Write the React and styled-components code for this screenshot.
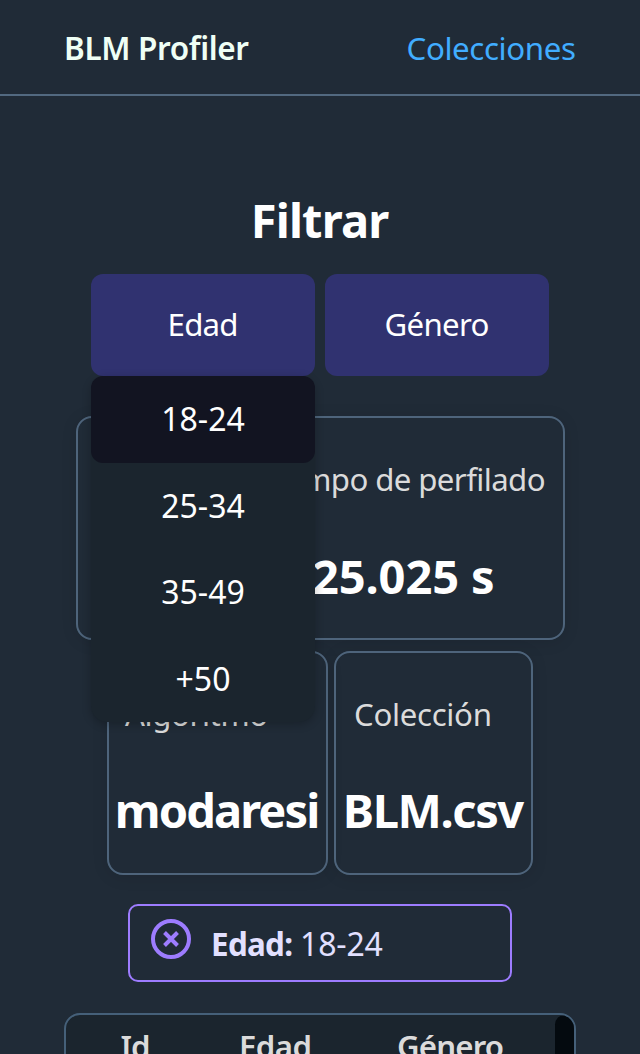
import React from "react";
import styled, { createGlobalStyle } from "styled-components";

const GlobalStyle = createGlobalStyle`
  * { box-sizing: border-box; }
  html, body { margin: 0; height: 1054px; overflow: hidden; }
  body {
    background: #202b37;
    color: #dbdbdb;
    font: 32px/44px "Noto Sans", "Open Sans", sans-serif;
    white-space: nowrap;
  }
`;

const Text = styled.span`
  letter-spacing: ${(p) => p.$track || 0}px;
  margin-right: ${(p) => -(p.$track || 0)}px;
`;

const Header = styled.header`
  display: flex;
  justify-content: space-between;
  height: 96px;
  padding: 26px 64px 0 64px;
  border-bottom: 2px solid #526980;
`;

const Brand = styled.div`
  color: #effff5;
  font-size: 31.5px;
  font-weight: 650;
`;

const NavLink = styled.a`
  color: #41adff;
  font-size: 31.3px;
`;

const Main = styled.main`
  display: flex;
  flex-direction: column;
  align-items: center;
`;

const Title = styled.h1`
  margin: 92px 0 0;
  color: #fff;
  font-size: 47px;
  line-height: 65px;
  font-weight: 700;
`;

const Filters = styled.div`
  display: flex;
  gap: 10px;
  margin-top: 21px;
`;

const Filter = styled.div`
  position: relative;
  width: 224px;
`;

const FilterButton = styled.button`
  display: block;
  width: 100%;
  height: 102px;
  padding: 0 0 2px;
  border: 0;
  border-radius: 12px;
  background: #303270;
  color: #fff;
  font: inherit;
  font-size: 31.2px;
`;

const Menu = styled.div`
  position: absolute;
  z-index: 2;
  top: 102px;
  left: 0;
  width: 100%;
  border-radius: 16px;
  background: #1b252e;
  box-shadow: 0 2px 10px rgba(0, 0, 0, 0.24);
`;

const Option = styled.div`
  height: 86.5px;
  padding-top: 21px;
  border-radius: 12px;
  background: ${(p) => (p.$active ? "#121421" : "transparent")};
  color: #fff;
  text-align: center;
`;

const Cards = styled.div`
  display: flex;
  gap: 6px;
  margin-top: ${(p) => p.$top}px;
`;

const Card = styled.section`
  display: flex;
  justify-content: flex-end;
  width: ${(p) => p.$width}px;
  height: 224px;
  padding: 39px ${(p) => p.$right || 0}px 0 0;
  border: 2px solid #4e647b;
  border-radius: 16px;
  box-shadow: 0 2px 16px rgba(0, 0, 0, 0.1);
`;

const Stat = styled.div`
  display: flex;
  flex-direction: column;
  align-items: ${(p) => (p.$left ? "stretch" : "center")};
  flex: ${(p) => (p.$left ? 1 : "none")};
`;

const Label = styled.div`
  padding-left: ${(p) => p.$left || 0}px;
  font-size: 31.2px;
`;

const Value = styled.div`
  margin-top: ${(p) => p.$top || 42}px;
  color: #fff;
  font-size: 47px;
  line-height: 65px;
  font-weight: 700;
  text-align: center;
`;

const Chip = styled.div`
  display: flex;
  width: 384px;
  height: 78px;
  margin-top: 29px;
  padding: 13px 0 0 21px;
  border: 2px solid #9d7cff;
  border-radius: 10px;
  color: #e2e0ff;
`;

const ChipText = styled.div`
  display: flex;
  gap: 7px;
  margin: 3px 0 0 20px;
`;

const Strong = styled.strong`
  font-size: 31.4px;
  font-weight: 700;
`;

const Table = styled.div`
  display: flex;
  justify-content: space-between;
  width: 512px;
  height: 100px;
  margin-top: 31px;
  border: 2px solid #456079;
  border-radius: 16px;
  background: #1b252e;
  overflow: hidden;
`;

const Columns = styled.div`
  display: grid;
  grid-template-columns: 139px 141px 209px;
  padding-top: 9px;
  font-size: 31.2px;
  font-weight: 650;
  text-align: center;
`;

const ScrollThumb = styled.div`
  width: 19px;
  border-radius: 10px;
  background: #040a0f;
`;

function CloseCircle() {
  return (
    <svg width="40" height="40" viewBox="0 0 40 40" fill="none" stroke="#9d7cff" strokeWidth="4">
      <circle cx="20" cy="20" r="18" />
      <path d="M13.5 13.5 26.5 26.5M26.5 13.5 13.5 26.5" />
    </svg>
  );
}

const ages = ["18-24", "25-34", "35-49", "+50"];

export default function App() {
  return (
    <>
      <GlobalStyle />
      <Header>
        <Brand><Text $track={-0.35}>BLM Profiler</Text></Brand>
        <NavLink><Text $track={-0.4}>Colecciones</Text></NavLink>
      </Header>
      <Main>
        <Title><Text $track={-0.8}>Filtrar</Text></Title>
        <Filters>
          <Filter>
            <FilterButton><Text $track={-0.8}>Edad</Text></FilterButton>
            <Menu>
              {ages.map((age, i) => (
                <Option key={age} $active={i === 0}><Text>{age}</Text></Option>
              ))}
            </Menu>
          </Filter>
          <Filter>
            <FilterButton><Text $track={-0.7}>Género</Text></FilterButton>
          </Filter>
        </Filters>
        <Cards $top={40}>
          <Card $width={489} $right={17}>
            <Stat>
              <Label><Text $track={-0.6}>Tiempo de perfilado</Text></Label>
              <Value $top={43}><Text $track={-0.1}>25.025 s</Text></Value>
            </Stat>
          </Card>
        </Cards>
        <Cards $top={11}>
          <Card $width={221}>
            <Stat $left>
              <Label $left={16}><Text $track={-0.4}>Algoritmo</Text></Label>
              <Value><Text $track={-1.9}>modaresi</Text></Value>
            </Stat>
          </Card>
          <Card $width={199}>
            <Stat $left>
              <Label $left={18}><Text $track={-0.3}>Colección</Text></Label>
              <Value><Text $track={-1.4}>BLM.csv</Text></Value>
            </Stat>
          </Card>
        </Cards>
        <Chip>
          <CloseCircle />
          <ChipText>
            <Strong><Text $track={-0.7}>Edad:</Text></Strong>
            <Text $track={-0.2}>18-24</Text>
          </ChipText>
        </Chip>
        <Table>
          <Columns>
            <Text $track={-1}>Id</Text>
            <Text $track={-0.6}>Edad</Text>
            <Text $track={-0.8}>Género</Text>
          </Columns>
          <ScrollThumb />
        </Table>
      </Main>
    </>
  );
}
